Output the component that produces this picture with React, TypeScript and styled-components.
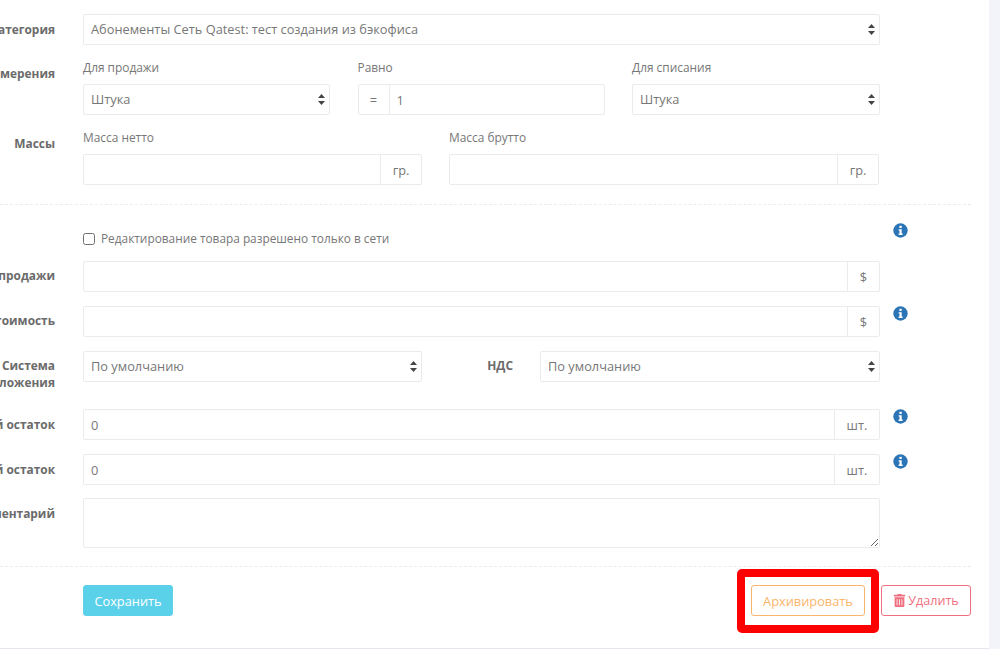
import React from "react";
import styled, { createGlobalStyle } from "styled-components";
import { FaTrashAlt } from "react-icons/fa";

const Global = createGlobalStyle`
  html, body { margin: 0; padding: 0; background: #f3f4f9; overflow: hidden; }
  body { font-family: "Open Sans", "Noto Sans", sans-serif; font-size: 12px; color: #777; }
`;

const Panel = styled.form`
  width: 989px;
  height: 649px;
  box-sizing: border-box;
  background: #fff;
  border-bottom: 1px solid #e6e7ee;
  padding: 14px 18px 0 0;
  display: flex;
  flex-direction: column;
`;

const Row = styled.div<{ $mt?: number }>`
  display: grid;
  grid-template-columns: 55px 797px 1fr;
  column-gap: 28px;
  margin-top: ${(p) => p.$mt ?? 0}px;
`;

const Label = styled.div<{ $pt?: number }>`
  display: flex;
  justify-content: flex-end;
  text-align: right;
  font-weight: 700;
  font-size: 11.9px;
  line-height: 17px;
  color: #6b6b6b;
  white-space: nowrap;
  padding-top: ${(p) => p.$pt ?? 6}px;
`;

const Fields = styled.div<{ $cols: string; $gap?: number }>`
  display: grid;
  grid-template-columns: ${(p) => p.$cols};
  column-gap: ${(p) => p.$gap ?? 27}px;
  align-items: start;
`;

const Caption = styled.div`
  font-size: 11.9px;
  line-height: 17px;
  color: #777;
  margin-bottom: 8px;
`;

const SelectWrap = styled.div`
  position: relative;
`;

const Select = styled.select`
  appearance: none;
  display: block;
  width: 100%;
  height: 31px;
  box-sizing: border-box;
  border: 1px solid #ebebeb;
  border-radius: 2px;
  background: #fff;
  padding: 0 7px 2px;
  font: 12.8px "Open Sans", sans-serif;
  color: #777;
  outline: none;
`;

const Arrows = styled.svg`
  position: absolute;
  right: 5px;
  top: 10px;
  width: 7px;
  height: 11px;
  pointer-events: none;
`;

const Group = styled.div`
  display: flex;
  height: 31px;
  box-sizing: border-box;
  border: 1px solid #ebebeb;
  border-radius: 2px;
  background: #fff;
`;

const Input = styled.input`
  flex: 1;
  min-width: 0;
  border: 0;
  outline: none;
  padding: 0 7px;
  font: 12.8px "Open Sans", sans-serif;
  color: #777;
  background: transparent;
`;

const Addon = styled.span<{ $w: number; $side?: "left" | "right" }>`
  flex: 0 0 ${(p) => p.$w}px;
  display: flex;
  align-items: center;
  justify-content: center;
  font-size: 12.8px;
  color: #777;
  ${(p) => (p.$side === "left" ? "border-right" : "border-left")}: 1px solid #ebebeb;
`;

const Info = styled.svg`
  width: 15px;
  height: 15px;
  margin-left: -15px;
  display: block;
`;

const Divider = styled.div<{ $mt: number }>`
  border-top: 1px dashed #ececec;
  margin-top: ${(p) => p.$mt}px;
`;

const CheckLine = styled.label`
  display: flex;
  align-items: center;
  gap: 6px;
  height: 17px;
  margin: 6px 0 1px;
  font-size: 11.85px;
  color: #777;
`;

const Check = styled.input`
  appearance: none;
  width: 12px;
  height: 12px;
  margin: 2px 0 0;
  border: 1px solid #6f6f6f;
  border-radius: 2.5px;
  background: #fff;
`;

const InlineLabel = styled(Label)`
  padding-right: 27px;
`;

const SplitField = styled.div`
  display: grid;
  grid-template-columns: 1fr 340px;
`;

const Area = styled.textarea`
  display: block;
  width: 100%;
  height: 50px;
  box-sizing: border-box;
  border: 1px solid #ebebeb;
  border-radius: 2px;
  background: #fff;
  resize: both;
  outline: none;
`;

const Actions = styled.div`
  display: flex;
  align-items: flex-start;
  margin-top: 18px;
  padding-left: 83px;
`;

const Button = styled.button<{ $color: string; $solid?: boolean }>`
  height: 31px;
  box-sizing: border-box;
  border-radius: 3px;
  border: 1px solid ${(p) => p.$color};
  background: ${(p) => (p.$solid ? p.$color : "#fff")};
  color: ${(p) => (p.$solid ? "#fff" : p.$color)};
  font: 12.8px "Open Sans", sans-serif;
  padding: 0;
  display: flex;
  align-items: center;
  justify-content: center;
  gap: 2px;
`;

const SaveButton = styled(Button)`
  width: 90px;
  margin-right: auto;
`;

const ArchiveWrap = styled.div`
  position: relative;
  margin-right: 16px;
`;

const ArchiveButton = styled(Button)`
  width: 114px;
`;

const DeleteButton = styled(Button)`
  width: 90px;
  font-size: 12.6px;
`;

const Highlight = styled.div`
  position: absolute;
  left: -14px;
  right: -14px;
  top: -16px;
  bottom: -17px;
  border: 8px solid #ff0000;
  border-radius: 5px;
  pointer-events: none;
`;

const ArrowIcon = () => (
  <Arrows viewBox="0 0 7 11">
    <path d="M3.5 0 L7 4 H0 Z M0 7 H7 L3.5 11 Z" fill="#444" />
  </Arrows>
);

const InfoIcon = () => (
  <Info viewBox="0 0 15 15">
    <circle cx="7.5" cy="7.5" r="7.2" fill="#2b74b5" />
    <rect x="6.4" y="2.8" width="2.3" height="2.2" fill="#fff" />
    <path d="M5.6 6.2 H8.7 V10.6 H9.6 V12 H5.6 V10.6 H6.5 V7.6 H5.6 Z" fill="#fff" />
  </Info>
);

const Drop = ({ value }: { value: string }) => (
  <SelectWrap>
    <Select defaultValue={value}>
      <option>{value}</option>
    </Select>
    <ArrowIcon />
  </SelectWrap>
);

export default function App() {
  return (
    <>
      <Global />
      <Panel>
        <Row>
          <Label $pt={7}>Категория</Label>
          <Drop value="Абонементы Сеть Qatest: тест создания из бэкофиса" />
        </Row>

        <Row $mt={14}>
          <Label>Единицы измерения</Label>
          <Fields $cols="247px 247px 248px" $gap={27.5}>
            <div>
              <Caption>Для продажи</Caption>
              <Drop value="Штука" />
            </div>
            <div>
              <Caption>Равно</Caption>
              <Group>
                <Addon $w={30} $side="left">=</Addon>
                <Input defaultValue="1" />
              </Group>
            </div>
            <div>
              <Caption>Для списания</Caption>
              <Drop value="Штука" />
            </div>
          </Fields>
        </Row>

        <Row $mt={14}>
          <Label>Массы</Label>
          <Fields $cols="339px 430px">
            <div>
              <Caption>Масса нетто</Caption>
              <Group>
                <Input />
                <Addon $w={40}>гр.</Addon>
              </Group>
            </div>
            <div>
              <Caption>Масса брутто</Caption>
              <Group>
                <Input />
                <Addon $w={40}>гр.</Addon>
              </Group>
            </div>
          </Fields>
        </Row>

        <Divider $mt={19} />

        <Row $mt={18}>
          <span />
          <CheckLine>
            <Check type="checkbox" />
            Редактирование товара разрешено только в сети
          </CheckLine>
          <InfoIcon />
        </Row>

        <Row $mt={14}>
          <Label>Цена продажи</Label>
          <Group>
            <Input />
            <Addon $w={31}>$</Addon>
          </Group>
        </Row>

        <Row $mt={14}>
          <Label>Себестоимость</Label>
          <Group>
            <Input />
            <Addon $w={31}>$</Addon>
          </Group>
          <InfoIcon />
        </Row>

        <Row $mt={14}>
          <Label>Система<br />налогообложения</Label>
          <SplitField>
            <Fields $cols="339px 1fr" $gap={0}>
              <Drop value="По умолчанию" />
              <InlineLabel>НДС</InlineLabel>
            </Fields>
            <Drop value="По умолчанию" />
          </SplitField>
        </Row>

        <Row $mt={18}>
          <Label $pt={7}>Минимальный остаток</Label>
          <Group>
            <Input defaultValue="0" />
            <Addon $w={44}>шт.</Addon>
          </Group>
          <InfoIcon />
        </Row>

        <Row $mt={14}>
          <Label $pt={7}>Максимальный остаток</Label>
          <Group>
            <Input defaultValue="0" />
            <Addon $w={44}>шт.</Addon>
          </Group>
          <InfoIcon />
        </Row>

        <Row $mt={13}>
          <Label $pt={7}>Комментарий</Label>
          <Area />
        </Row>

        <Divider $mt={18} />

        <Actions>
          <SaveButton type="button" $color="#5bd0e9" $solid>Сохранить</SaveButton>
          <ArchiveWrap>
            <ArchiveButton type="button" $color="#f9b56b">Архивировать</ArchiveButton>
            <Highlight />
          </ArchiveWrap>
          <DeleteButton type="button" $color="#ef6f80">
            <FaTrashAlt size={13} />
            Удалить
          </DeleteButton>
        </Actions>
      </Panel>
    </>
  );
}
